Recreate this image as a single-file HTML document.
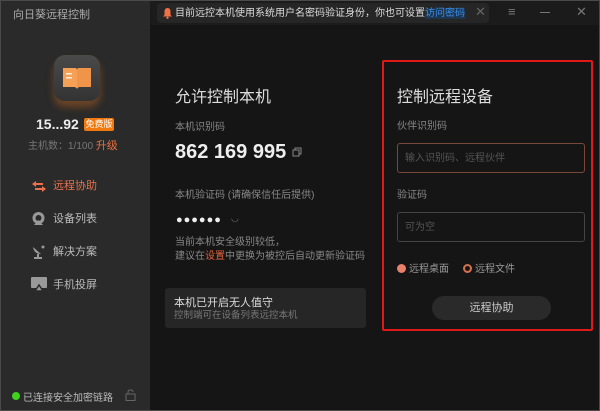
<!DOCTYPE html>
<html><head><meta charset="utf-8"><style>
*{margin:0;padding:0;box-sizing:border-box}
body{width:600px;height:411px;background:#151515;font-family:"Liberation Sans","Noto Sans CJK SC",sans-serif;position:relative;overflow:hidden;color:#ccc}
.a{position:absolute;white-space:nowrap}
.nav{font-size:11px;color:#bbb;line-height:14px}
.g{color:#888;font-size:10px;line-height:13px}
</style></head><body>
<div class="a" style="left:0;top:0;width:150px;height:411px;background:#2a2a2a"></div>
<div class="a" style="left:150px;top:0;width:450px;height:25px;background:#1b1b1b"></div>
<div class="a" style="left:0;top:0;width:600px;height:411px;border:1px solid #4a4a4a"></div>
<div class="a" style="left:13px;top:6px;font-size:11px;color:#aaa">向日葵远程控制</div>

<div class="a" style="left:157px;top:3px;width:332px;height:20px;background:#262626;border-radius:4px"></div>
<svg class="a" style="left:162px;top:7px" width="11" height="12" viewBox="0 0 11 12"><path d="M5.5 1C3.5 1 2.5 2.5 2.5 4.5V8L1 9.5H10L8.5 8V4.5C8.5 2.5 7.5 1 5.5 1Z" fill="#f07048"/><circle cx="5.5" cy="10.8" r="1.2" fill="#f07048"/></svg>
<div class="a" style="left:175px;top:7px;font-size:10px;color:#ddd;line-height:13px">目前远控本机使用系统用户名密码验证身份，你也可设置<span style="color:#3a8ee6;background:#1e3550">访问密码</span></div>
<div class="a" style="left:475px;top:4px;font-size:13px;color:#666">✕</div>
<div class="a" style="left:508px;top:4px;font-size:13px;color:#777">≡</div>
<div class="a" style="left:540px;top:12px;width:10px;height:1px;background:#777"></div>
<div class="a" style="left:576px;top:4px;font-size:13px;color:#777">✕</div>

<div class="a" style="left:54px;top:55px;width:46px;height:46px;border-radius:11px;background:linear-gradient(#4a4a4a,#333);box-shadow:0 6px 8px rgba(240,120,30,.35)"></div>
<svg class="a" style="left:61px;top:66px" width="32" height="25" viewBox="0 0 32 25"><path d="M2 2H14Q16 2 16 4V23Q15 21 13 21H2Z" fill="#f5a055"/><path d="M30 2H18Q16 2 16 4V23Q17 21 19 21H30Z" fill="#f0944a"/><rect x="5" y="7" width="6" height="1.5" fill="#fff" opacity=".8"/><rect x="5" y="11" width="6" height="1.5" fill="#fff" opacity=".8"/></svg>
<div class="a" style="left:36px;top:116px;font-size:14px;font-weight:bold;color:#eee">15...92</div>
<div class="a" style="left:84px;top:118px;width:30px;height:13px;background:#f07a10;border-radius:2px;font-size:9px;color:#fff;text-align:center;line-height:13px">免费版</div>
<div class="a g" style="left:28px;top:140px;color:#777">主机数：1/100 <span style="color:#e8703e;font-size:11px">升级</span></div>

<svg class="a" style="left:31px;top:180px" width="16" height="13" viewBox="0 0 16 13"><path d="M5 1L1 4L5 7V5H12V3H5Z" fill="#e8704a"/><path d="M11 6L15 9L11 12V10H4V8H11Z" fill="#e8704a"/></svg>
<div class="a nav" style="left:53px;top:179px;color:#e8704a">远程协助</div>
<svg class="a" style="left:31px;top:211px" width="15" height="15" viewBox="0 0 15 15"><circle cx="7.5" cy="7" r="6" fill="#999"/><circle cx="7.5" cy="7" r="3" fill="#2a2a2a"/><path d="M3 14L7.5 9L12 14Z" fill="#999"/></svg>
<div class="a nav" style="left:53px;top:212px">设备列表</div>
<svg class="a" style="left:32px;top:244px" width="14" height="15" viewBox="0 0 14 15"><path d="M1 3Q2 10 9 10Z" fill="#999"/><rect x="5" y="10" width="2" height="3" fill="#999"/><rect x="2" y="13" width="8" height="2" fill="#999"/><circle cx="11" cy="3" r="1.5" fill="#999"/></svg>
<div class="a nav" style="left:53px;top:245px">解决方案</div>
<svg class="a" style="left:31px;top:277px" width="16" height="14" viewBox="0 0 16 14"><rect x="0" y="0" width="16" height="11" rx="1" fill="#999"/><path d="M4 14L8 8L12 14Z" fill="#999" stroke="#2a2a2a" stroke-width="1.5"/></svg>
<div class="a nav" style="left:53px;top:278px">手机投屏</div>

<div class="a" style="left:12px;top:392px;width:8px;height:8px;border-radius:50%;background:#3ed21e"></div>
<div class="a" style="left:23px;top:389px;font-size:10px;color:#bbb">已连接安全加密链路</div>
<svg class="a" style="left:125px;top:389px" width="11" height="12" viewBox="0 0 11 12"><rect x="1" y="5" width="9" height="6.5" fill="none" stroke="#666"/><path d="M3 5V3Q3 1 5.5 1Q8 1 8 3" fill="none" stroke="#666"/></svg>

<div class="a" style="left:175px;top:83px;font-size:16px;color:#ddd">允许控制本机</div>
<div class="a g" style="left:175px;top:121px">本机识别码</div>
<div class="a" style="left:175px;top:141px;font-size:20px;font-weight:bold;color:#eee">862 169 995</div>
<svg class="a" style="left:292px;top:147px" width="10" height="10" viewBox="0 0 10 10"><rect x="1" y="3" width="6" height="6" fill="none" stroke="#888"/><path d="M3 3V1H9V7H7" fill="none" stroke="#888"/></svg>
<div class="a g" style="left:175px;top:189px">本机验证码 (请确保信任后提供)</div>
<div class="a" style="left:176px;top:214px;font-size:11px;color:#eee;letter-spacing:1px">●●●●●●</div>
<div class="a" style="left:231px;top:213px;font-size:9px;color:#777">◡</div>
<div class="a g" style="left:175px;top:236px">当前本机安全级别较低，</div>
<div class="a g" style="left:175px;top:250px">建议在<span style="color:#e8603a">设置</span>中更换为被控后自动更新验证码</div>

<div class="a" style="left:165px;top:288px;width:201px;height:40px;background:#262626;border-radius:3px"></div>
<div class="a" style="left:174px;top:294px;font-size:11px;color:#ddd">本机已开启无人值守</div>
<div class="a g" style="left:174px;top:309px;color:#777;font-size:9.5px">控制端可在设备列表远控本机</div>

<div class="a" style="left:382px;top:60px;width:211px;height:271px;border:2px solid #e01818;border-radius:2px"></div>
<div class="a" style="left:397px;top:83px;font-size:16px;color:#ddd">控制远程设备</div>
<div class="a g" style="left:397px;top:120px">伙伴识别码</div>
<div class="a" style="left:397px;top:143px;width:188px;height:30px;border:1px solid #7a4838;border-radius:3px"></div>
<div class="a g" style="left:405px;top:152px;color:#555">输入识别码、远程伙伴</div>
<div class="a g" style="left:397px;top:189px">验证码</div>
<div class="a" style="left:397px;top:212px;width:188px;height:30px;border:1px solid #444;border-radius:3px"></div>
<div class="a g" style="left:405px;top:221px;color:#555">可为空</div>
<div class="a" style="left:397px;top:264px;width:9px;height:9px;border-radius:50%;background:#e8806a"></div>
<div class="a g" style="left:409px;top:263px;color:#999">远程桌面</div>
<div class="a" style="left:463px;top:264px;width:9px;height:9px;border-radius:50%;border:2px solid #d87050"></div>
<div class="a g" style="left:475px;top:263px;color:#999">远程文件</div>
<div class="a" style="left:432px;top:296px;width:119px;height:24px;border-radius:12px;background:#2a2a2a;font-size:11px;color:#ccc;text-align:center;line-height:24px">远程协助</div>
</body></html>
